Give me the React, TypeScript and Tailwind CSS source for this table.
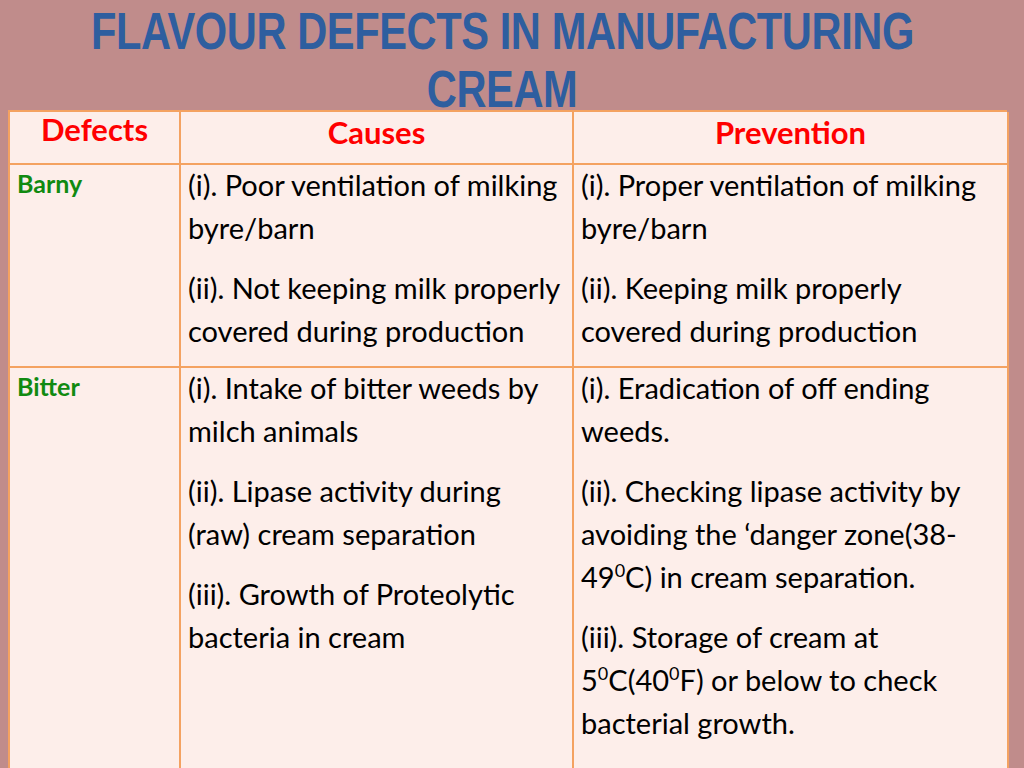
import React from 'react'

const body = "font-['Lato','Open_Sans',sans-serif] text-[29px] leading-[43px] text-black"
const line = 'border-[#f4a261]'

function Sup({ children }: { children: React.ReactNode }) {
  return <span className="relative -top-[11px] text-[18px] leading-none">{children}</span>
}

function Cell({ items, h }: { items: React.ReactNode[]; h: string }) {
  return (
    <div className={`${h} border-b-2 border-r-2 ${line} bg-[#fdeeea] px-[7px]`}>
      {items.map((t, i) => (
        <p key={i} className={`${body} ${i > 0 ? 'mt-[17px]' : '-mt-[2px]'}`}>{t}</p>
      ))}
    </div>
  )
}

export default function App() {
  return (
    <div className="h-[768px] w-[1024px] overflow-hidden bg-[#c08c8b]">
      <h1 className="flex h-[110px] flex-col items-center pr-[20px] font-['Liberation_Sans','Arial',sans-serif] text-[52px] font-bold leading-[62px] tracking-[-0.5px] text-[#2e5e9f]">
        <span className="inline-block scale-x-[0.8] whitespace-nowrap">FLAVOUR DEFECTS IN MANUFACTURING</span>
        <span className="-mt-[4px] inline-block scale-x-[0.8]">CREAM</span>
      </h1>
      <div className={`ml-[8px] grid w-[999px] grid-cols-[171px_393px_435px] border-l-2 border-t-2 ${line}`}>
        <div className={`h-[53px] border-b-2 border-r-2 ${line} bg-[#fdeeea] text-center`}>
          <span className="font-['Lato',sans-serif] text-[31px] font-bold leading-[34px] text-[#ff0000]">Defects</span>
        </div>
        <div className={`h-[53px] border-b-2 border-r-2 ${line} bg-[#fdeeea] pt-[3px] text-center`}>
          <span className="font-['Lato',sans-serif] text-[31px] font-bold leading-[34px] text-[#ff0000]">Causes</span>
        </div>
        <div className={`h-[53px] border-b-2 border-r-2 ${line} bg-[#fdeeea] pt-[3px] text-center`}>
          <span className="font-['Lato',sans-serif] text-[31px] font-bold leading-[34px] text-[#ff0000]">Prevention</span>
        </div>

        <div className={`h-[203px] border-b-2 border-r-2 ${line} bg-[#fdeeea] px-[7px]`}>
          <span className="font-['Lato',sans-serif] text-[25px] font-bold leading-[36px] text-[#118a11]">Barny</span>
        </div>
        <Cell h="h-[203px]" items={['(i). Poor ventilation of milking byre/barn', '(ii). Not keeping milk properly covered during production']} />
        <Cell h="h-[203px]" items={['(i). Proper ventilation of milking byre/barn', '(ii). Keeping milk properly covered during production']} />

        <div className={`h-[420px] border-r-2 ${line} bg-[#fdeeea] px-[7px]`}>
          <span className="font-['Lato',sans-serif] text-[25px] font-bold leading-[36px] text-[#118a11]">Bitter</span>
        </div>
        <Cell h="h-[420px]" items={['(i). Intake of bitter weeds by milch animals', '(ii). Lipase activity during (raw) cream separation', '(iii). Growth of Proteolytic bacteria in cream']} />
        <Cell
          h="h-[420px]"
          items={[
            '(i). Eradication of off ending weeds.',
            <>(ii). Checking lipase activity by avoiding the ‘danger zone(38-49<Sup>0</Sup>C) in cream separation.</>,
            <>(iii). Storage of cream at 5<Sup>0</Sup>C(40<Sup>0</Sup>F) or below to check bacterial growth.</>,
          ]}
        />
      </div>
    </div>
  )
}
